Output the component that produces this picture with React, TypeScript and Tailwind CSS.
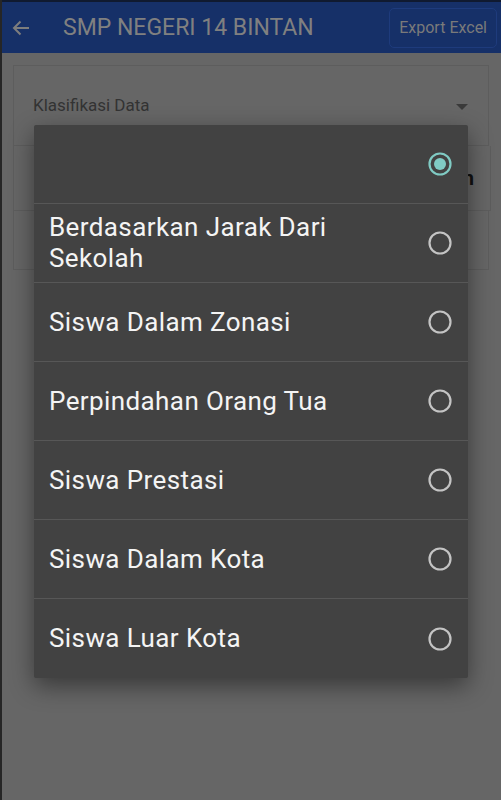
import React from 'react';

const options = [
  '',
  'Berdasarkan Jarak Dari Sekolah',
  'Siswa Dalam Zonasi',
  'Perpindahan Orang Tua',
  'Siswa Prestasi',
  'Siswa Dalam Kota',
  'Siswa Luar Kota',
];

const Radio = ({ checked }: { checked: boolean }) => (
  <svg width="26" height="26" viewBox="0 0 26 26">
    <circle
      cx="13"
      cy="13"
      r="10.5"
      fill="none"
      stroke={checked ? '#80cbc4' : '#c4c4c4'}
      strokeWidth="2.2"
    />
    {checked && <circle cx="13" cy="13" r="6" fill="#80cbc4" />}
  </svg>
);

export default function App() {
  const selected = 0;

  return (
    <div className="relative h-[800px] w-[501px] overflow-hidden border-l-2 border-[#262626] bg-[#666666] font-['Roboto',sans-serif]">
      {/* app bar */}
      <header className="flex h-[53px] items-center border-t-2 border-[#101a30] bg-[#163068]">
        <svg width="24" height="24" viewBox="0 0 24 24" className="ml-[7px]">
          <path
            d="M20 12H5M11.5 5.5L5 12l6.5 6.5"
            fill="none"
            stroke="#7d7d7d"
            strokeWidth="2"
          />
        </svg>
        <h1 className="ml-[30px] text-[23px] leading-none text-[#808080]">SMP NEGERI 14 BINTAN</h1>
        <button className="ml-auto mr-[4px] h-[40px] rounded-[5px] border border-[#1e3b7c] px-[9px] text-[16px] text-[#7a7a7a]">
          Export Excel
        </button>
      </header>

      {/* filter card behind the dialog */}
      <div className="px-[11px] pt-[12px]">
        <div className="flex h-[81px] w-[476px] items-center justify-between border border-[#5d5d5d] pl-[19px] pr-[20px]">
          <span className="text-[17px] text-[#333333]">Klasifikasi Data</span>
          <svg width="12" height="8" viewBox="0 0 12 8" className="mt-[2px]">
            <path d="M0 1h12L6 7z" fill="#3a3a3a" />
          </svg>
        </div>
        <div className="flex h-[65px] w-[478px] items-center justify-end border border-t-0 border-[#5d5d5d] pr-[16px]">
          <span className="text-[20px] font-bold text-[#111111]">Tampilkan</span>
        </div>
        <div className="h-[59px] w-[476px] border border-t-0 border-[#5d5d5d]" />
      </div>

      {/* options dialog */}
      <div className="absolute left-[32px] top-[125px] w-[434px] rounded-[2px] bg-[#424242] shadow-[0_8px_24px_rgba(0,0,0,0.45)]">
        {options.map((label, i) => (
          <div
            key={i}
            className={`flex h-[79px] items-center justify-between pl-[15px] pr-[15px] ${
              i < options.length - 1 ? 'border-b border-[#575757]' : ''
            }`}
          >
            <span className="max-w-[340px] text-[26px] leading-[31px] tracking-[0.4px] text-[#f4f4f4]">
              {label}
            </span>
            <Radio checked={i === selected} />
          </div>
        ))}
      </div>
    </div>
  );
}
